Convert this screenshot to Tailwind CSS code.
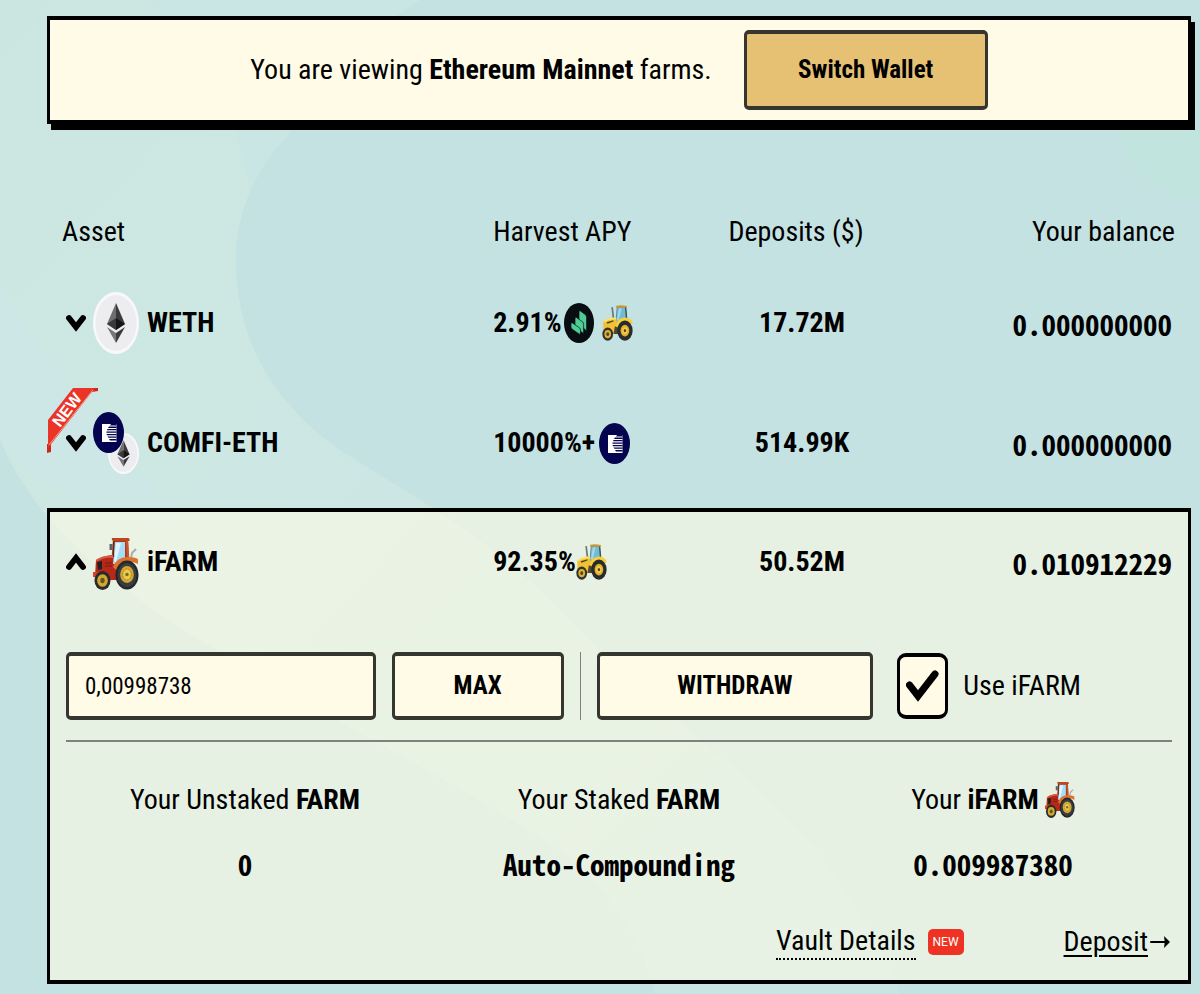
<!DOCTYPE html>
<html lang="en">
<head>
  <meta charset="UTF-8" />
  <meta name="viewport" content="width=device-width, initial-scale=1.0" />
  <title>Farms</title>
  <script src="https://cdn.jsdelivr.net/npm/@tailwindcss/browser@4"></script>
</head>
<body class="relative min-h-screen bg-[#c4e2e2] font-['Roboto_Condensed','Roboto',sans-serif] text-[28px] leading-9 text-black">
  <!-- Background waves -->
  <svg class="absolute inset-0 -z-10 h-full w-full" viewBox="0 0 1200 994" preserveAspectRatio="none" aria-hidden="true">
    <defs>
      <linearGradient id="wave" x1="0" y1="0" x2="1" y2="1">
        <stop offset="0" stop-color="#cbe5e1" />
        <stop offset="0.3" stop-color="#cde7e3" />
        <stop offset="0.6" stop-color="#cbe6e3" />
        <stop offset="1" stop-color="#c8e5e3" />
      </linearGradient>
    </defs>
    <rect width="1200" height="994" fill="#c4e2e2" />
    <path d="M0 0H420C340 50 300 110 288 135C250 175 235 220 236 265C238 340 270 400 340 450C410 495 480 530 560 610C650 710 780 790 830 870C870 930 890 960 900 994H655C645 940 610 890 560 850C440 770 250 680 140 600C80 555 30 510 0 440Z" fill="url(#wave)" />
    <path d="M150 0H420C340 50 300 110 288 135C270 153 258 170 250 188C240 120 200 50 150 0Z" fill="#c9e5e4" />
    <path d="M0 290C50 360 100 440 190 520C110 520 40 490 0 440Z" fill="#cce7e6" />
    <path d="M1120 130H1200V202C1160 195 1125 175 1120 130Z" fill="#c2e4de" />
  </svg>

  <!-- Icons -->
  <svg class="hidden" aria-hidden="true">
    <symbol id="chevron" viewBox="0 0 20 18" preserveAspectRatio="none">
      <path d="M3 4L10 13L17 4" fill="none" stroke="#000" stroke-width="5.8" stroke-linecap="round" />
    </symbol>
    <symbol id="eth" viewBox="0 0 46 62" preserveAspectRatio="none">
      <ellipse cx="23" cy="31" rx="23" ry="31" fill="#f8f8fa" />
      <ellipse cx="23" cy="31" rx="20.500" ry="28" fill="#ededef" />
      <path d="M23 11L14 32L23 38Z" fill="#6e6e70" />
      <path d="M23 11L32 32L23 38Z" fill="#3a3a3c" />
      <path d="M23 26L14 32L23 38Z" fill="#39393b" />
      <path d="M23 26L32 32L23 38Z" fill="#151516" />
      <path d="M14 35L23 41V51Z" fill="#77777a" />
      <path d="M32 35L23 41V51Z" fill="#3b3b3d" />
    </symbol>
    <symbol id="comfi" viewBox="0 0 31 41" preserveAspectRatio="none">
      <ellipse cx="15.500" cy="20.500" rx="15.500" ry="20.500" fill="#03034f" />
      <path d="M9 12H23.500V30H9Z" fill="#fff" />
      <path d="M18 12H23.500V13.500H17ZM16 14.500H23.500V16H15ZM14.500 17H23.500V18.300H14ZM13.500 19.500H23.500V20.800H13.500ZM13.500 22H23.500V23.300H14ZM14.500 24.500H23.500V25.800H15.500ZM16 27H23.500V28.500H17Z" fill="#03034f" />
    </symbol>
    <symbol id="comp" viewBox="0 0 30 40" preserveAspectRatio="none">
      <ellipse cx="15" cy="20" rx="15" ry="20" fill="#080d12" />
      <g fill="#50cc96" stroke="#080d12" stroke-width="0.700" stroke-linejoin="round">
        <path d="M15 9Q15 7 16.500 8L21.800 12Q22.600 13 22.600 14.500V28L15 21Z" />
        <path d="M11 16Q11 13.500 12.500 14.500L18.800 19Q19.600 20 19.600 21.500V30.500L11 24Z" />
        <path d="M7 21Q7 19 8.500 20L15.700 25Q16.500 26 16.500 27V30Q16.500 32 15 31L8 26Q7 25 7 23.500Z" />
      </g>
    </symbol>
    <symbol id="tractor-red" viewBox="0 0 46 52" preserveAspectRatio="none">
      <path d="M38 20L39 15L43 11" fill="none" stroke="#a9adb0" stroke-width="2" />
      <path d="M18 6V12" stroke="#5d6468" stroke-width="3" />
      <path d="M20 3H35L36 26H18Z" fill="#a93a1c" />
      <path d="M22 4H32V20L29 26H20Z" fill="#a6dcf7" />
      <path d="M23 5H28L23 24H21Z" fill="#e0f5ff" />
      <path d="M19 0H35Q37 0 36.500 3H20Q18 2 19 0Z" fill="#b9471f" />
      <path d="M20.500 3V19" stroke="#5a2a1d" stroke-width="1.200" />
      <path d="M34 3L35 20" stroke="#c9532a" stroke-width="2.500" />
      <path d="M3 22Q8 18 20 17V26H27V42H14L2 38Z" fill="#b5291a" />
      <path d="M3 22Q8 18 20 17V20Q10 19 4 24Z" fill="#df5a3a" />
      <path d="M4 24L9 23V31L5 32Z" fill="#25201f" />
      <path d="M12 25H19M12 28H19" stroke="#7c180f" stroke-width="1" />
      <path d="M0 34H7V39H0Z" fill="#d8402c" />
      <path d="M20 29Q24 19 34 19Q42 19 45 21V26Q34 20 23 32Z" fill="#dd722f" />
      <ellipse cx="34" cy="37" rx="11.500" ry="14.500" fill="#25272a" />
      <ellipse cx="34" cy="37" rx="9.500" ry="12" fill="#3a3d40" />
      <ellipse cx="34" cy="36.500" rx="6.800" ry="8.500" fill="#d5a92f" />
      <ellipse cx="34" cy="36.500" rx="4.300" ry="5.500" fill="#e9c94e" stroke="#8f701e" stroke-width="0.800" stroke-dasharray="2 1" />
      <circle cx="34" cy="36.500" r="1.700" fill="#806722" />
      <ellipse cx="9.500" cy="42.500" rx="8" ry="9.500" fill="#292b2d" />
      <ellipse cx="9.500" cy="42.500" rx="5.300" ry="6.300" fill="#d3a92d" />
      <ellipse cx="9.500" cy="42.500" rx="2.200" ry="2.800" fill="#5f5529" />
    </symbol>
    <symbol id="tractor-yellow" viewBox="0 0 46 52" preserveAspectRatio="none">
      <path d="M15 3L17 19" stroke="#6e7679" stroke-width="2.500" />
      <path d="M22 3H36L37 25H20Z" fill="#4d7f90" />
      <path d="M23 4H34L35 20L29 25H21Z" fill="#72bbd5" />
      <path d="M25 5H29L25 22H22Z" fill="#a0d9ea" />
      <path d="M21 1Q28 -0.500 37 1.500V4H21Z" fill="#c99a35" />
      <path d="M35 4L37 20" stroke="#3d4c50" stroke-width="1.500" />
      <path d="M2 24Q8 18 21 18L22 25H29V42H14L2 37Z" fill="#f0c132" />
      <path d="M2 24Q8 18 21 18V21Q10 20 4 25Z" fill="#ffe36e" />
      <path d="M7 25L17 22V24L8 27Z" fill="#4b4222" />
      <path d="M19 31H26V42H17Z" fill="#4f4930" />
      <path d="M20 30Q24 18 34 18Q43 19 45 24V28Q34 20 23 33Z" fill="#f6cf3b" />
      <ellipse cx="34" cy="37" rx="11.500" ry="14.500" fill="#292b2d" />
      <ellipse cx="34" cy="37" rx="6.500" ry="8.500" fill="#e0b02e" />
      <ellipse cx="34" cy="37" rx="4" ry="5" fill="#f4ce4b" />
      <ellipse cx="34" cy="37" rx="1.800" ry="2.300" fill="#51471d" />
      <ellipse cx="8.500" cy="42" rx="8" ry="9.500" fill="#303234" />
      <ellipse cx="8.500" cy="42" rx="5" ry="6" fill="#e0b02e" />
      <ellipse cx="8.500" cy="42" rx="2.300" ry="2.800" fill="#51471d" />
    </symbol>
  </svg>

  <main class="pt-4 pr-[9px] pb-[10px] pl-[47px]">
    <!-- Network banner -->
    <section class="flex h-[108px] items-center justify-center gap-8 border-x-3 border-y-4 border-black bg-[#fffbe7] shadow-[4px_6px_0_#000]">
      <p>You are viewing <b>Ethereum Mainnet</b> farms.</p>
      <button type="button" class="h-20 w-[244px] rounded-[5px] border-x-3 border-y-4 border-[#363630] bg-[#e6c073] text-[25px] font-bold">Switch Wallet</button>
    </section>

    <table class="mt-[74px] w-full table-fixed border-separate border-spacing-0">
      <thead>
        <tr class="h-[65px] align-top">
          <th scope="col" class="w-[39%] pt-4 pl-[15px] text-left font-normal">Asset</th>
          <th scope="col" class="w-[18%] pt-4 text-left font-normal">Harvest APY</th>
          <th scope="col" class="w-[18%] pt-4 pr-3 text-center font-normal">Deposits ($)</th>
          <th scope="col" class="w-[25%] pt-4 pr-4 text-right font-normal">Your balance</th>
        </tr>
      </thead>
      <tbody class="font-bold">
        <tr class="h-[120px]">
          <td class="pl-[19px]">
            <div class="flex items-center">
              <button type="button" aria-label="Expand WETH"><svg class="h-[18px] w-5"><use href="#chevron" /></svg></button>
              <svg class="mr-2 ml-[7px] h-[62px] w-[46px]"><use href="#eth" /></svg>
              WETH
            </div>
          </td>
          <td>
            <div class="flex items-center">
              2.91%
              <svg class="ml-[2px] h-10 w-[30px]"><use href="#comp" /></svg>
              <svg class="ml-2 h-9 w-[31px]"><use href="#tractor-yellow" /></svg>
            </div>
          </td>
          <td class="text-center">17.72M</td>
          <td class="pr-[19px] text-right font-['Noto_Sans_Mono_CJK_SC',monospace] text-[29px]">0.000000000</td>
        </tr>
        <tr class="h-[125px]">
          <td class="relative pb-[5px] pl-[19px]">
            <svg class="absolute top-[5px] left-0 h-[65px] w-[52px]" viewBox="0 0 52 65" role="img" aria-label="New">
              <path d="M44 0H51V3L45 4Z" fill="#d3261b" />
              <path d="M0 56H4V64L0 65Z" fill="#d3261b" />
              <path d="M26 0H48L1 60V32Z" fill="#ea3427" />
              <path d="M46 2L2 57" fill="none" stroke="#f5a09a" stroke-width="1" />
              <text transform="translate(13 40) rotate(-53)" fill="#fff" font-family="Liberation Sans" font-size="16" font-weight="700">NEW</text>
            </svg>
            <div class="relative flex items-center">
              <button type="button" aria-label="Expand COMFI-ETH"><svg class="h-[18px] w-5"><use href="#chevron" /></svg></button>
              <div class="relative mr-2 ml-[7px] h-[62px] w-[46px]">
                <svg class="absolute right-0 bottom-0 h-[41px] w-[31px]"><use href="#eth" /></svg>
                <svg class="absolute top-0 left-0 h-[41px] w-[31px]"><use href="#comfi" /></svg>
              </div>
              COMFI-ETH
            </div>
          </td>
          <td class="pb-[5px]">
            <div class="flex items-center">
              10000%+
              <svg class="ml-1 h-[41px] w-[31px]"><use href="#comfi" /></svg>
            </div>
          </td>
          <td class="pb-[5px] text-center">514.99K</td>
          <td class="pr-[19px] pb-[5px] text-right font-['Noto_Sans_Mono_CJK_SC',monospace] text-[29px]">0.000000000</td>
        </tr>
        <tr class="h-[108px]">
          <td class="border-t-4 border-l-3 border-black bg-[#fffce6]/58 pb-1 pl-4">
            <div class="flex items-center">
              <button type="button" aria-label="Collapse iFARM"><svg class="h-[18px] w-5 rotate-180"><use href="#chevron" /></svg></button>
              <svg class="mt-1 mr-2 ml-[7px] h-[52px] w-[46px]"><use href="#tractor-red" /></svg>
              iFARM
            </div>
          </td>
          <td class="border-t-4 border-black bg-[#fffce6]/58 pb-1">
            <div class="flex items-center">
              92.35%
              <svg class="h-9 w-[31px]"><use href="#tractor-yellow" /></svg>
            </div>
          </td>
          <td class="border-t-4 border-black bg-[#fffce6]/58 pb-1 text-center">50.52M</td>
          <td class="border-t-4 border-r-3 border-black bg-[#fffce6]/58 pr-4 pb-1 text-right font-['Noto_Sans_Mono_CJK_SC',monospace] text-[29px]">0.010912229</td>
        </tr>
        <tr>
          <td colspan="4" class="border-x-3 border-b-4 border-black bg-[#fffce6]/58 px-2 pt-9 pb-5 font-normal">
            <div class="mx-2 flex items-center border-b-2 border-[#808080] pb-5">
              <input type="text" aria-label="Amount" value="0,00998738" class="h-[68px] w-[28%] rounded-[5px] border-x-3 border-y-4 border-[#363630] bg-[#fffbe7] px-4 text-[23px]" />
              <button type="button" class="ml-4 h-[68px] w-[172px] rounded-[5px] border-x-3 border-y-4 border-[#363630] bg-[#fffbe7] text-[25px] font-bold">MAX</button>
              <div class="mx-4 h-[68px] w-px bg-[#808080]"></div>
              <button type="button" class="h-[68px] w-[25%] rounded-[5px] border-x-3 border-y-4 border-[#363630] bg-[#fffbe7] text-[25px] font-bold">WITHDRAW</button>
              <label class="ml-6 flex items-center gap-[15px]">
                <span class="relative h-[66px] w-[51px]">
                  <input type="checkbox" checked class="h-full w-full appearance-none rounded-[9px] border-x-3 border-y-4 border-black bg-[#fffbe7]" />
                  <svg class="pointer-events-none absolute top-[17px] left-[9px] h-8 w-[33px]" viewBox="0 0 33 32" fill="none">
                    <path d="M3.500 15L12 26L29 4" stroke="#000" stroke-width="7" stroke-linecap="round" />
                  </svg>
                </span>
                Use iFARM
              </label>
            </div>

            <div class="mt-10 grid grid-cols-3 text-center">
              <div>
                <p>Your Unstaked <b>FARM</b></p>
                <p class="mt-[27px] font-['Noto_Sans_Mono_CJK_SC',monospace] text-[29px] leading-9 font-bold">0</p>
              </div>
              <div>
                <p>Your Staked <b>FARM</b></p>
                <p class="mt-[27px] font-['Noto_Sans_Mono_CJK_SC',monospace] text-[29px] leading-9 font-bold">Auto-Compounding</p>
              </div>
              <div>
                <p class="flex items-center justify-center gap-[6px]">
                  <span>Your <b>iFARM</b></span>
                  <svg class="h-9 w-[30px]"><use href="#tractor-red" /></svg>
                </p>
                <p class="mt-[27px] font-['Noto_Sans_Mono_CJK_SC',monospace] text-[29px] leading-9 font-bold">0.009987380</p>
              </div>
            </div>

            <div class="mt-[43px] mr-[10px] flex items-center justify-end">
              <a href="#" class="border-b-2 border-dotted border-black leading-[34px]">Vault Details</a>
              <span class="ml-3 rounded-[5px] bg-[#ee3224] px-[5px] font-['Roboto'] text-[12px] leading-[26px] text-white">NEW</span>
              <a href="#" class="ml-[100px] underline decoration-2 underline-offset-4">Deposit</a>
              <svg class="ml-[2px] h-4 w-5" viewBox="0 0 20 16">
                <path d="M1 8H16" stroke="#000" stroke-width="2" stroke-linecap="round" />
                <path d="M14 2L20 8L14 14Q15.500 8 14 2Z" />
              </svg>
            </div>
          </td>
        </tr>
      </tbody>
    </table>
  </main>
</body>
</html>
